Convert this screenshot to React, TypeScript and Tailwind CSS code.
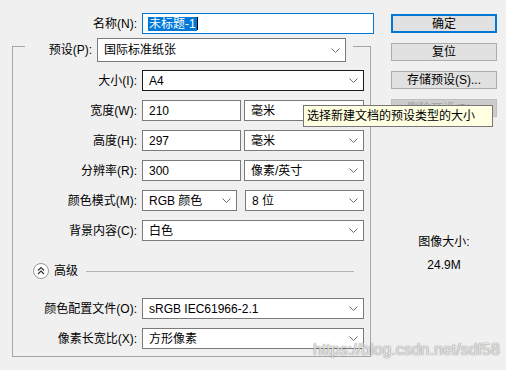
import React from "react";

function Chevron() {
  return (
    <svg width="9" height="5" viewBox="0 0 9 5" className="shrink-0">
      <path d="M0.5 0.5 L4.5 4.5 L8.5 0.5" fill="none" stroke="#6d6d6d" strokeWidth="1" />
    </svg>
  );
}

function Drop({ text, className }: { text: string; className: string }) {
  return (
    <div className={`flex h-full items-center justify-between border bg-white pl-[6px] pr-[5px] ${className}`}>
      <span>{text}</span>
      <Chevron />
    </div>
  );
}

function Field({ text, className }: { text: string; className: string }) {
  return (
    <div className={`flex h-full items-center border border-[#7a7a7a] bg-white pl-[6px] ${className}`}>
      {text}
    </div>
  );
}

function Row({ label, children }: { label: string; children: React.ReactNode }) {
  return (
    <div className="flex h-[21px] items-center">
      <div className="w-[129px] pr-[5px] text-right whitespace-nowrap">{label}</div>
      {children}
    </div>
  );
}

function Btn({ children, className }: { children: React.ReactNode; className: string }) {
  return (
    <div className={`flex w-[106px] items-center justify-center ${className}`}>{children}</div>
  );
}

export default function App() {
  return (
    <div className="relative flex h-[370px] w-[506px] bg-[#f0f0f0] font-['Liberation_Sans','Noto_Sans_CJK_SC',sans-serif] text-[12px] leading-none text-black">
      {/* left side */}
      <div className="w-[380px]">
        <div className="mt-[13px] flex h-[21px] items-center">
          <div className="w-[142px] pr-[5px] text-right">名称(N):</div>
          <div className="flex h-full w-[232px] items-center border border-[#0078d7] bg-white pl-[5px]">
            <span className="bg-[#0078d7] px-[1px] py-[1px] text-white">未标题-1</span>
            <span className="h-[13px] w-px bg-black" />
          </div>
        </div>

        {/* group box */}
        <div className="mt-[12px] ml-[12px] h-[311px] w-[359px] border border-[#a5a5a5]">
          <div className="-mt-[9px] ml-[12px] flex h-[24px] w-[328px] items-center bg-[#f0f0f0]">
            <div className="w-[72px] pr-[5px] text-right">预设(P):</div>
            <Drop text="国际标准纸张" className="w-[249px] border-[#7a7a7a]" />
          </div>

          <div className="mt-[8px] flex flex-col gap-[9px]">
            <Row label="大小(I):">
              <Drop text="A4" className="w-[222px] border-[#1a1a1a]" />
            </Row>
            <Row label="宽度(W):">
              <Field text="210" className="w-[99px]" />
              <Drop text="毫米" className="ml-[3px] w-[120px] border-[#7a7a7a]" />
            </Row>
            <Row label="高度(H):">
              <Field text="297" className="w-[99px]" />
              <Drop text="毫米" className="ml-[3px] w-[120px] border-[#7a7a7a]" />
            </Row>
            <Row label="分辨率(R):">
              <Field text="300" className="w-[99px]" />
              <Drop text="像素/英寸" className="ml-[3px] w-[120px] border-[#7a7a7a]" />
            </Row>
            <Row label="颜色模式(M):">
              <Drop text="RGB 颜色" className="w-[95px] border-[#7a7a7a]" />
              <Drop text="8 位" className="ml-[8px] w-[119px] border-[#7a7a7a]" />
            </Row>
            <Row label="背景内容(C):">
              <Drop text="白色" className="w-[222px] border-[#7a7a7a]" />
            </Row>
          </div>

          <div className="mt-[22px] ml-[20px] mr-[16px] flex h-[16px] items-center">
            <svg width="16" height="16" viewBox="0 0 16 16" className="shrink-0">
              <circle cx="8" cy="8" r="7.5" fill="#fff" stroke="#9a9a9a" />
              <path d="M5 7.5 L8 4.5 L11 7.5 M5 11 L8 8 L11 11" fill="none" stroke="#333" strokeWidth="1.2" />
            </svg>
            <span className="ml-[5px]">高级</span>
            <div className="ml-[8px] h-px flex-1 bg-[#b4b4b4]" />
          </div>

          <div className="mt-[19px] flex flex-col gap-[9px]">
            <Row label="颜色配置文件(O):">
              <Drop text="sRGB IEC61966-2.1" className="w-[222px] border-[#7a7a7a]" />
            </Row>
            <Row label="像素长宽比(X):">
              <Drop text="方形像素" className="w-[222px] border-[#7a7a7a]" />
            </Row>
          </div>
        </div>
      </div>

      {/* right side */}
      <div className="ml-[11px] flex w-[106px] flex-col items-center pt-[14px]">
        <Btn className="h-[19px] border-2 border-[#0078d7] bg-[#e1e1e1]">确定</Btn>
        <Btn className="mt-[10px] h-[18px] border border-[#adadad] bg-[#e1e1e1]">复位</Btn>
        <Btn className="mt-[10px] h-[18px] border border-[#adadad] bg-[#e1e1e1]">存储预设(S)...</Btn>
        <Btn className="mt-[10px] h-[18px] items-start overflow-hidden border border-[#bfbfbf] bg-[#cccccc] pt-[3px] text-[#a0a0a0]">删除预设(D)...</Btn>
        <div className="mt-[118px] leading-[14px]">图像大小:</div>
        <div className="mt-[9px] leading-[14px]">24.9M</div>
      </div>

      {/* tooltip */}
      <div className="absolute left-[303px] top-[105px] flex h-[22px] w-[190px] items-center border border-[#767676] bg-[#ffffe1] pl-[3px]">
        选择新建文档的预设类型的大小
      </div>

      {/* watermark */}
      <div className="absolute left-[313px] top-[341px] font-['Liberation_Sans',sans-serif] text-[16px] leading-[18px] text-[#e4e4e4] [text-shadow:0_0_1px_rgba(0,0,0,0.45),0_0_2px_rgba(0,0,0,0.2)]">
        https://blog.csdn.net/sdf58
      </div>
    </div>
  );
}
